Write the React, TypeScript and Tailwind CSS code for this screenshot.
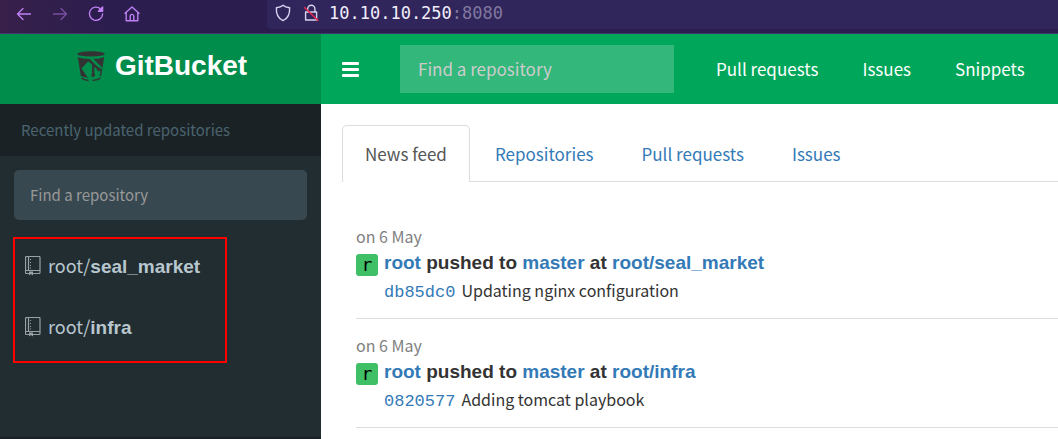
import React from "react";

const SANS = "font-['Noto_Sans_CJK_SC','Noto_Sans',sans-serif]";
const HEAD = "font-['Liberation_Sans',Arial,sans-serif]";

type Push = { date: string; user: string; branch: string; repo: string; sha: string; message: string };

const pushes: Push[] = [
  { date: "on 6 May", user: "root", branch: "master", repo: "root/seal_market", sha: "db85dc0", message: "Updating nginx configuration" },
  { date: "on 6 May", user: "root", branch: "master", repo: "root/infra", sha: "0820577", message: "Adding tomcat playbook" },
];

const repos = [
  { owner: "root", name: "seal_market" },
  { owner: "root", name: "infra" },
];

function BrowserBar() {
  return (
    <div className="flex h-[34px] items-start border-b border-[#43366e] bg-linear-to-r from-[#38204a] via-[#2b1d4e] via-10% to-[#2b1d4e]">
      <div className="flex h-[27px] w-[267px] shrink-0 items-center gap-4 pl-[14px] text-[#bf80f5]">
        <button aria-label="Back" className="h-5 w-5">
          <svg viewBox="0 0 20 20" className="h-5 w-5" fill="none" stroke="currentColor" strokeWidth="1.3" strokeLinecap="round" strokeLinejoin="round">
            <path d="M16.5 10H3.5M9 4.5L3.5 10L9 15.5" />
          </svg>
        </button>
        <button aria-label="Forward" className="h-5 w-5 opacity-50">
          <svg viewBox="0 0 20 20" className="h-5 w-5" fill="none" stroke="currentColor" strokeWidth="1.3" strokeLinecap="round" strokeLinejoin="round">
            <path d="M3.5 10H16.5M11 4.5L16.5 10L11 15.5" />
          </svg>
        </button>
        <button aria-label="Reload" className="h-5 w-5">
          <svg viewBox="0 0 20 20" className="h-5 w-5" fill="none" stroke="currentColor" strokeWidth="1.4" strokeLinecap="round" strokeLinejoin="round">
            <path d="M14.8 5.2A6.6 6.6 0 1 0 16.6 10" />
            <path d="M16.6 3v4.2h-4.2z" fill="currentColor" />
          </svg>
        </button>
        <button aria-label="Home" className="h-5 w-5">
          <svg viewBox="0 0 20 20" className="h-5 w-5" fill="none" stroke="currentColor" strokeWidth="1.4" strokeLinecap="round" strokeLinejoin="round">
            <path d="M3 9.2L10 3L17 9.2M4.2 8.5V16.8H15.8V8.5M8.2 16.5V12.2a1.8 1.8 0 0 1 3.6 0V16.5" />
          </svg>
        </button>
      </div>
      <div className="flex h-[29px] grow items-center gap-2 rounded-bl-sm bg-[#30265c] pb-[3px] pl-1.5">
        <svg viewBox="0 0 20 20" className="h-5 w-5" fill="none" stroke="#d9d2ee" strokeWidth="1.4" strokeLinejoin="round">
          <path d="M10 2.2C11.8 3.8 14 4.4 16.6 4.8C17 10.8 14.8 15.6 10 17.6C5.200 15.6 3 10.800 3.400 4.800C6 4.400 8.200 3.800 10 2.200Z" />
        </svg>
        <svg viewBox="0 0 20 20" className="h-5 w-5" fill="none" strokeWidth="1.4" strokeLinecap="round" strokeLinejoin="round">
          <path stroke="#d9d2ee" d="M6.700 9V5.800a3.600 3.600 0 0 1 7.200 0V9M4.600 9H15.600V17H4.600Z" />
          <path stroke="#e22850" strokeWidth="1.6" d="M3.500 4.500L17 17.500" />
        </svg>
        <span className="font-['DejaVu_Sans_Mono',monospace] text-[17px] leading-6 text-[#f0edf9]">
          10.10.10.250<span className="text-[#81789f]">:8080</span>
        </span>
      </div>
    </div>
  );
}

function BucketLogo() {
  return (
    <svg viewBox="0 0 28 31" className="h-[31px] w-7" aria-hidden="true">
      <path d="M.700 5.500C4 8.500 24 8.500 27.300 5.500L24 26C20 28.500 8 28.500 4 26Z" fill="#333" />
      <path d="M.400 5C5 7.800 23 7.800 27.600 5" stroke="#008d4c" strokeWidth="1.200" fill="none" />
      <ellipse cx="14" cy="2.900" rx="13.600" ry="2.700" fill="#333" />
      <path d="M11.500 10L15.500 13L23.500 19.500L22.500 27H11L4.500 17.500Z" fill="#008d4c" />
      <path d="M14 7.500L24.500 18" stroke="#008d4c" strokeWidth="2.600" />
      <path d="M11.500 9L16.200 13.300V24M16.200 13.300L21.500 18" stroke="#333" strokeWidth="2.200" fill="none" />
      <circle cx="16.200" cy="24" r="1.900" fill="#333" />
      <circle cx="21.800" cy="18.300" r="1.900" fill="#333" />
      <path d="M3.500 25.500C8 28.500 20 28.500 24.500 25.500" stroke="#008d4c" strokeWidth="1.600" fill="none" />
      <path d="M4.500 27.200C7 29 9 29.200 11.500 29.400M15.500 29.400C19 29.200 21.500 28.500 23.500 27.200" stroke="#333" strokeWidth="1.500" fill="none" />
    </svg>
  );
}

function RepoIcon() {
  return (
    <svg viewBox="0 0 16 20" className="h-5 w-4 shrink-0" fill="none" stroke="#98a1a4" strokeWidth="1.2" aria-hidden="true">
      <path d="M5 17.500H1.500a1 1 0 0 1-1-1V1.500a1 1 0 0 1 1-1H14a1 1 0 0 1 1 1V16.500a1 1 0 0 1-1 1H8M3.500.500V14M.500 14.500H15" />
      <path d="M5 3.500h1M5 6.500h1M5 9.500h1M5 12h1" />
      <path d="M4 15.500h4v4l-2-1.500l-2 1.500z" fill="#98a1a4" stroke="none" />
    </svg>
  );
}

function Sidebar() {
  return (
    <aside className="flex w-[321px] shrink-0 flex-col border-b-2 border-[#1a2226] bg-[#222d32]">
      <a href="#" className={`flex h-[70px] items-center justify-center gap-2.5 bg-[#008d4c] pb-1.5 pl-[3px] text-[28px] font-bold text-white ${HEAD}`}>
        <BucketLogo />
        <span className="leading-8">GitBucket</span>
      </a>
      <h2 className="bg-[#1a2226] px-[21px] py-3.5 text-[15px] leading-6 text-[#4b646f]">Recently updated repositories</h2>
      <div className="px-3.5 pt-3.5">
        <input
          type="text"
          aria-label="Filter repositories"
          placeholder="Find a repository"
          className="h-[50px] w-full rounded-[5px] bg-[#374850] px-4 pb-0.5 text-[15px] text-white outline-none placeholder:text-[#999]"
        />
      </div>
      <ul className="mt-[17px] mr-[94px] ml-[13px] border-2 border-[#ff0000]">
        {repos.map((r) => (
          <li key={r.name}>
            <a href="#" className="flex h-[61px] items-center gap-[7px] pb-2 pl-[10px] text-[18px] leading-7 text-[#b8c7ce]">
              <RepoIcon />
              <span>
                {r.owner}/<b className={`text-[19px] ${HEAD}`}>{r.name}</b>
              </span>
            </a>
          </li>
        ))}
      </ul>
    </aside>
  );
}

function Navbar() {
  return (
    <header className="flex h-[70px] items-center bg-[#00a65a] text-white">
      <button aria-label="Toggle navigation" className="ml-[21px] flex w-[17px] shrink-0 flex-col gap-[3px]">
        <span className="h-[3px] rounded-[1px] bg-white" />
        <span className="h-[3px] rounded-[1px] bg-white" />
        <span className="h-[3px] rounded-[1px] bg-white" />
      </button>
      <input
        type="search"
        aria-label="Find a repository"
        placeholder="Find a repository"
        className="ml-[41px] h-12 w-[274px] bg-white/20 px-[18px] pb-0.5 text-[17px] outline-none placeholder:text-[#ccc]"
      />
      <nav className="ml-[42px] flex gap-11 text-[17px] leading-7 whitespace-nowrap">
        <a href="#">Pull requests</a>
        <a href="#">Issues</a>
        <a href="#">Snippets</a>
      </nav>
    </header>
  );
}

function Feed() {
  return (
    <div className="pt-7 pl-[14px]">
      {pushes.map((p) => (
        <article key={p.sha} className="border-b border-[#ddd] pt-3.5 pb-4">
          <div className="text-[16px] leading-6 text-[#808080]">{p.date}</div>
          <div className="flex h-[30px] items-center gap-1.5">
            <span className="mt-1 flex h-[22px] w-[22px] items-center justify-center rounded-[3px] bg-[#3fbf66] font-['DejaVu_Sans_Mono',monospace] text-[18px] leading-5 text-black">r</span>
            <p className={`text-[19px] leading-7 font-bold text-[#333] ${HEAD}`}>
              <a href="#" className="text-[#337ab7]">{p.user}</a> pushed to <a href="#" className="text-[#337ab7]">{p.branch}</a> at{" "}
              <a href="#" className="text-[#337ab7]">{p.repo}</a>
            </p>
          </div>
          <p className="flex h-6 items-baseline gap-1.5 pl-7 text-[16px] leading-6 text-[#333]">
            <a href="#" className="font-['Liberation_Mono',monospace] text-[17px] text-[#337ab7]">{p.sha}</a>
            <span>{p.message}</span>
          </p>
        </article>
      ))}
    </div>
  );
}

export default function App() {
  return (
    <div className={`flex min-h-screen flex-col bg-white ${SANS}`}>
      <BrowserBar />
      <div className="flex grow">
        <Sidebar />
        <div className="min-w-0 grow">
          <Navbar />
          <main className="pt-[21px] pl-[21px]">
            <nav className="flex h-[57px] gap-0.5 border-b border-[#ddd] text-[17px] leading-7 text-[#337ab7]">
              <a href="#" aria-current="page" className="h-[57px] rounded-t-[5px] border border-b-0 border-[#ddd] bg-white px-[22px] pt-[14px] text-[#555]">
                News feed
              </a>
              <a href="#" className="px-[23px] pt-[15px]">Repositories</a>
              <a href="#" className="px-[23px] pt-[15px]">Pull requests</a>
              <a href="#" className="px-[23px] pt-[15px]">Issues</a>
            </nav>
            <Feed />
          </main>
        </div>
      </div>
    </div>
  );
}
